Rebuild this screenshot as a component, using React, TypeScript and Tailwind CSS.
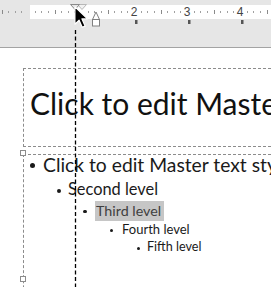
import React from "react";

function Ruler() {
  const zero = 28;
  const inch = 53;
  const marks: React.ReactNode[] = [];
  for (let k = -4; k <= 38; k++) {
    const x = zero + (k * inch) / 8;
    if (x < 0 || x > 271) continue;
    if (k % 8 === 0) continue;
    if (k % 4 === 0) {
      marks.push(<rect key={k} x={Math.round(x)} y={10} width={1} height={4} fill="#8a8a8a" />);
    } else {
      marks.push(<rect key={k} x={Math.round(x)} y={11} width={1} height={2} fill="#a0a0a0" />);
    }
  }
  const nums = [2, 3, 4];
  return (
    <svg width="271" height="47" className="block">
      <rect x="30" y="5" width="241" height="14" fill="#ffffff" />
      {marks}
      {nums.map((n) => (
        <text
          key={n}
          x={zero + n * inch}
          y={16}
          textAnchor="middle"
          fontSize="12"
          fill="#444"
          fontFamily="Liberation Sans, Arial, sans-serif"
        >
          {n}
        </text>
      ))}
      {nums.map((n) => (
        <rect key={"t" + n} x={zero + n * inch + 1} y={20} width={2.5} height={4} fill="#555" />
      ))}
      {/* ghost first-line indent */}
      <polygon points="77.5,4.5 86.5,4.5 82,9.5" fill="#f2f2f2" stroke="#b8b8b8" strokeWidth="1" />
      {/* first-line indent */}
      <polygon points="70.5,4.5 79.5,4.5 75,9.5" fill="#e8e8e8" stroke="#8a8a8a" strokeWidth="1" />
      {/* hanging indent + left indent */}
      <path d="M92.5,19.5 L96,12 L99.5,19.5 Z" fill="#fff" stroke="#808080" strokeWidth="1" />
      <rect x="92.5" y="19.5" width="7" height="6.5" fill="#fff" stroke="#808080" strokeWidth="1" />
    </svg>
  );
}

function Dot({ size, mt }: { size: string; mt: string }) {
  return <span className={"block rounded-full bg-[#1a1a1a] " + size + " " + mt} />;
}

export default function App() {
  const body = "text-[#1a1a1a]";
  return (
    <div className="relative w-[271px] h-[287px] overflow-hidden bg-white font-['Lato',sans-serif]">
      <div className="h-[48px] bg-[#e6e6e6] border-b border-[#a3a3a3]">
        <Ruler />
      </div>
      <div className="pl-[23px] pt-[20px]">
        <div className="h-[79px] border border-r-0 border-dashed border-[#8c8c8c] pt-[14px] pl-[6px]">
          <div className="text-[30px] leading-[40px] h-[40px] whitespace-nowrap text-[#111]">
            Click to edit Master title style
          </div>
        </div>
        <div className={"mt-[7px] h-[200px] border-t border-l border-dashed border-[#8c8c8c] whitespace-nowrap " + body}>
          <div className="flex items-center h-[19px] text-[19.3px] leading-[19px] pl-[6px]">
            <span className="w-[13px] shrink-0">
              <Dot size="w-[5px] h-[5px]" mt="mt-[1px]" />
            </span>
            <span>Click to edit Master text styles</span>
          </div>
          <div className="flex items-center mt-[3px] h-[24px] text-[16.4px] leading-[24px] pl-[33px]">
            <span className="w-[11px] shrink-0">
              <Dot size="w-[4px] h-[4px]" mt="mt-[3px]" />
            </span>
            <span>Second level</span>
          </div>
          <div className="flex items-center h-[20px] text-[14.3px] leading-[20px] pl-[59px]">
            <span className="w-[12px] shrink-0">
              <Dot size="w-[3.5px] h-[3.5px]" mt="mt-[1px]" />
            </span>
            <span className="bg-[#c6c6c6] text-[#404040] pl-[1px] pr-[3px]">Third level</span>
          </div>
          <div className="flex items-center h-[16px] text-[13px] leading-[16px] pl-[86px]">
            <span className="w-[12px] shrink-0">
              <Dot size="w-[3px] h-[3px]" mt="mt-[3px]" />
            </span>
            <span>Fourth level</span>
          </div>
          <div className="flex items-center mt-[2px] h-[16px] text-[12.6px] leading-[16px] pl-[113px]">
            <span className="w-[10px] shrink-0">
              <Dot size="w-[3px] h-[3px]" mt="mt-[3px]" />
            </span>
            <span>Fifth level</span>
          </div>
        </div>
      </div>

      {/* selection handles */}
      <div className="absolute left-[20px] top-[150px] w-[6px] h-[6px] border border-[#8c8c8c] bg-white" />
      <div className="absolute left-[20px] top-[276px] w-[6px] h-[6px] border border-[#8c8c8c] bg-white" />

      {/* guide line */}
      <svg className="absolute left-0 top-0" width="271" height="287">
        <line x1="75.5" y1="30" x2="75.5" y2="287" stroke="#000" strokeWidth="1.3" strokeDasharray="4 2.5" />
      </svg>

      {/* mouse cursor */}
      <svg className="absolute left-[73px] top-[5px]" width="17" height="24" viewBox="0 0 14 20">
        <path
          d="M1.5,1.5 L1.5,16 L5,12.6 L7.6,18.6 L10,17.6 L7.4,11.6 L12,11.6 Z"
          fill="#000"
          stroke="#fff"
          strokeWidth="1"
          strokeLinejoin="round"
        />
      </svg>
    </div>
  );
}
